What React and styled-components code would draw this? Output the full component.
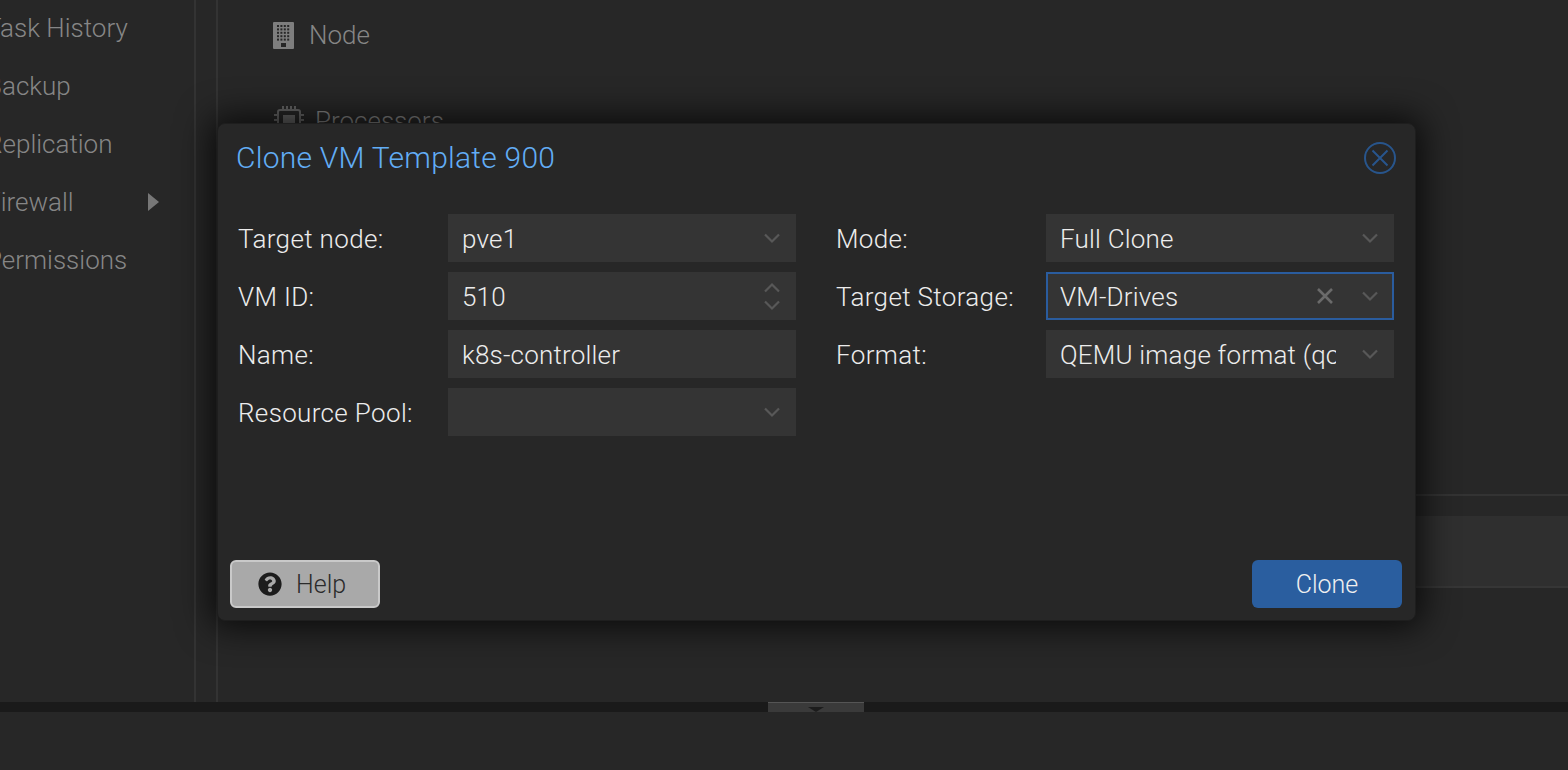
import * as React from "react";
import styled, { createGlobalStyle } from "styled-components";
import { FaQuestionCircle } from "react-icons/fa";

const GlobalStyle = createGlobalStyle`
  html, body {
    margin: 0;
    padding: 0;
    background: #272727;
    font-family: "Roboto", "Liberation Sans", sans-serif;
    font-weight: 300;
  }
`;

const Page = styled.div`
  position: relative;
  width: 1568px;
  height: 770px;
  overflow: hidden;
  display: flex;
  flex-direction: column;
  background: #272727;
`;

const Workspace = styled.div`
  height: 702px;
  display: flex;
  flex: none;
`;

const Sidebar = styled.nav`
  width: 194px;
  flex: none;
  overflow: hidden;
  border-right: 2px solid #333;
`;

const SideList = styled.ul`
  list-style: none;
  margin: -1px 0 0 -14px;
  padding: 0;
`;

const SideItem = styled.li`
  height: 58px;
  display: flex;
  align-items: center;
  justify-content: space-between;
  padding-right: 35px;
  font-size: 26px;
  color: #868686;
`;

const Arrow = styled.span`
  width: 0;
  height: 0;
  border-left: 11px solid #777;
  border-top: 9.5px solid transparent;
  border-bottom: 9.5px solid transparent;
`;

const Gutter = styled.div`
  width: 20px;
  flex: none;
  border-right: 2px solid #333;
`;

const Content = styled.main`
  flex: 1;
  padding-left: 55px;
`;

const HardwareRow = styled.div`
  height: 58px;
  display: flex;
  align-items: center;
  gap: ${(p) => p.$gap}px;
  margin-top: ${(p) => p.$top}px;
  font-size: 26px;
  color: #868686;
`;

const Divider = styled.div`
  height: 2px;
  background: #333;
  margin: 344px 0 0 -55px;
`;

const ListBand = styled.div`
  height: 70px;
  margin: 20px 0 0 -55px;
  background: #2f2f2f;
  border-bottom: 2px solid #363636;
`;

const SplitBar = styled.div`
  height: 10px;
  flex: none;
  background: #1a1a1a;
  display: flex;
  justify-content: center;
`;

const SplitHandle = styled.div`
  width: 96px;
  height: 10px;
  margin-left: 64px;
  box-sizing: border-box;
  background: #3a3a3a;
  border-top: 1px solid #555;
  display: flex;
  justify-content: center;
  padding-top: 4px;
`;

const SplitArrow = styled.span`
  width: 0;
  height: 0;
  border-top: 5px solid #1c1c1c;
  border-left: 8px solid transparent;
  border-right: 8px solid transparent;
`;

const Dialog = styled.section`
  position: absolute;
  left: 217px;
  top: 123px;
  width: 1199px;
  height: 498px;
  box-sizing: border-box;
  display: flex;
  flex-direction: column;
  background: #272727;
  border: 1px solid #1e1e1e;
  border-radius: 8px;
  box-shadow: 0 0 34px 6px rgba(0, 0, 0, 0.75);
`;

const DialogHeader = styled.header`
  height: 68px;
  flex: none;
  display: flex;
  align-items: center;
  justify-content: space-between;
  padding: 0 18px;
`;

const DialogTitle = styled.h2`
  margin: -2px 0 0;
  font-size: 30px;
  font-weight: 300;
  letter-spacing: 0.25px;
  color: #62adf5;
`;

const CloseButton = styled.button`
  width: 34px;
  height: 34px;
  padding: 0;
  display: block;
  background: none;
  border: none;
`;

const FormGrid = styled.div`
  flex: 1;
  display: grid;
  grid-template-columns: 558px 558px;
  column-gap: 40px;
  align-items: start;
  padding: 22px 0 0 20px;
`;

const FormColumn = styled.div`
  display: flex;
  flex-direction: column;
  gap: 10px;
`;

const FormRow = styled.div`
  display: flex;
  align-items: center;
  height: 48px;
`;

const Label = styled.label`
  width: 210px;
  flex: none;
  padding-top: 2px;
  font-size: 26px;
  letter-spacing: 0.35px;
  color: #ececec;
`;

const Field = styled.div`
  width: 348px;
  height: 48px;
  box-sizing: border-box;
  display: flex;
  align-items: center;
  background: #343434;
  border: ${(p) => (p.$focused ? "2px solid #2a5c9e" : "none")};
  padding-left: ${(p) => (p.$focused ? 12 : 14)}px;
  font-size: 26px;
  letter-spacing: 0.2px;
  color: #ececec;
`;

const FieldValue = styled.span`
  flex: 1;
  min-width: 0;
  padding-top: 2px;
  overflow: hidden;
  white-space: nowrap;
`;

const FieldIcons = styled.div`
  flex: none;
  display: flex;
  align-items: center;
  justify-content: flex-end;
  width: 58px;
  padding-right: ${(p) => (p.$focused ? 14 : 16)}px;
  box-sizing: border-box;
`;

const ClearIcon = styled.svg`
  flex: none;
`;

const Spinner = styled.div`
  display: flex;
  flex-direction: column;
  gap: 7px;
`;

const DialogFooter = styled.footer`
  flex: none;
  display: flex;
  justify-content: space-between;
  padding: 0 13px 12px 12px;
`;

const HelpButton = styled.button`
  width: 150px;
  height: 48px;
  display: flex;
  align-items: center;
  gap: 14px;
  padding: 0 0 0 26px;
  box-sizing: border-box;
  background: #a9a9a9;
  border: 2px solid #c9c9c9;
  border-radius: 6px;
  font: inherit;
  font-size: 25px;
  color: #2b2b2b;
`;

const PrimaryButton = styled.button`
  width: 150px;
  height: 48px;
  padding: 0;
  background: #2a5e9f;
  border: none;
  border-radius: 6px;
  font: inherit;
  font-size: 25px;
  color: #f0f0f0;
`;

function Chevron({ up }) {
  return (
    <svg width="16" height="11" viewBox="0 0 16 11" fill="none">
      <path
        d={up ? "M1 9.5 8 2.5l7 7" : "M1 1.5 8 8.5l7-7"}
        stroke="#585858"
        strokeWidth="2.2"
      />
    </svg>
  );
}

function NodeIcon() {
  const dots = [];
  for (let r = 0; r < 5; r++) {
    for (let c = 0; c < 4; c++) {
      dots.push(<rect key={`${r}-${c}`} x={4 + c * 3.4} y={3 + r * 3.4} width="2" height="2" fill="#272727" />);
    }
  }
  return (
    <svg width="21" height="27" viewBox="0 0 21 27">
      <rect width="21" height="27" rx="1" fill="#7e7e7e" />
      {dots}
      <rect x="8" y="21" width="5" height="4" fill="#272727" />
    </svg>
  );
}

function ChipIcon() {
  return (
    <svg width="32" height="32" viewBox="0 0 32 32" fill="none" stroke="#666" strokeWidth="2">
      <rect x="5" y="5" width="22" height="22" rx="2" />
      <rect x="10" y="10" width="12" height="12" fill="#666" stroke="none" />
      <path d="M10 1v4M14 1v4M18 1v4M22 1v4M1 10h4M1 15h4M1 20h4M27 10h4M27 15h4M27 20h4" />
    </svg>
  );
}

const sideItems = ["Task History", "Backup", "Replication", "Firewall", "Permissions"];

const leftFields = [
  { label: "Target node:", value: "pve1", kind: "select" },
  { label: "VM ID:", value: "510", kind: "spin" },
  { label: "Name:", value: "k8s-controller" },
  { label: "Resource Pool:", value: "", kind: "select" },
];

const rightFields = [
  { label: "Mode:", value: "Full Clone", kind: "select" },
  { label: "Target Storage:", value: "VM-Drives", kind: "select", focused: true },
  { label: "Format:", value: "QEMU image format (qcow2)", kind: "select" },
];

function FormField({ label, value, kind, focused }) {
  return (
    <FormRow>
      <Label>{label}</Label>
      <Field $focused={focused}>
        <FieldValue>{value}</FieldValue>
        {focused && (
          <ClearIcon width="18" height="18" viewBox="0 0 18 18" fill="none">
            <path d="M2 2l14 14M16 2 2 16" stroke="#6a6a6a" strokeWidth="2.6" />
          </ClearIcon>
        )}
        {kind && (
          <FieldIcons $focused={focused}>
            {kind === "select" && <Chevron />}
            {kind === "spin" && (
              <Spinner>
                <Chevron up />
                <Chevron />
              </Spinner>
            )}
          </FieldIcons>
        )}
      </Field>
    </FormRow>
  );
}

export default function App() {
  return (
    <Page>
      <GlobalStyle />
      <Workspace>
        <Sidebar>
          <SideList>
            {sideItems.map((item) => (
              <SideItem key={item}>
                {item}
                {item === "Firewall" && <Arrow />}
              </SideItem>
            ))}
          </SideList>
        </Sidebar>
        <Gutter />
        <Content>
          <HardwareRow $top={6} $gap={15}>
            <NodeIcon />
            Node
          </HardwareRow>
          <HardwareRow $top={28} $gap={10}>
            <ChipIcon />
            Processors
          </HardwareRow>
          <Divider />
          <ListBand />
        </Content>
      </Workspace>
      <SplitBar>
        <SplitHandle>
          <SplitArrow />
        </SplitHandle>
      </SplitBar>

      <Dialog>
        <DialogHeader>
          <DialogTitle>Clone VM Template 900</DialogTitle>
          <CloseButton aria-label="Close">
            <svg width="34" height="34" viewBox="0 0 34 34" fill="none" stroke="#28558c" strokeWidth="2">
              <circle cx="17" cy="17" r="15" />
              <path d="M9.5 9.5l15 15M24.5 9.5l-15 15" />
            </svg>
          </CloseButton>
        </DialogHeader>
        <FormGrid>
          <FormColumn>
            {leftFields.map((f) => (
              <FormField key={f.label} {...f} />
            ))}
          </FormColumn>
          <FormColumn>
            {rightFields.map((f) => (
              <FormField key={f.label} {...f} />
            ))}
          </FormColumn>
        </FormGrid>
        <DialogFooter>
          <HelpButton>
            <FaQuestionCircle size={24} color="#1c1c1c" />
            Help
          </HelpButton>
          <PrimaryButton>Clone</PrimaryButton>
        </DialogFooter>
      </Dialog>
    </Page>
  );
}
